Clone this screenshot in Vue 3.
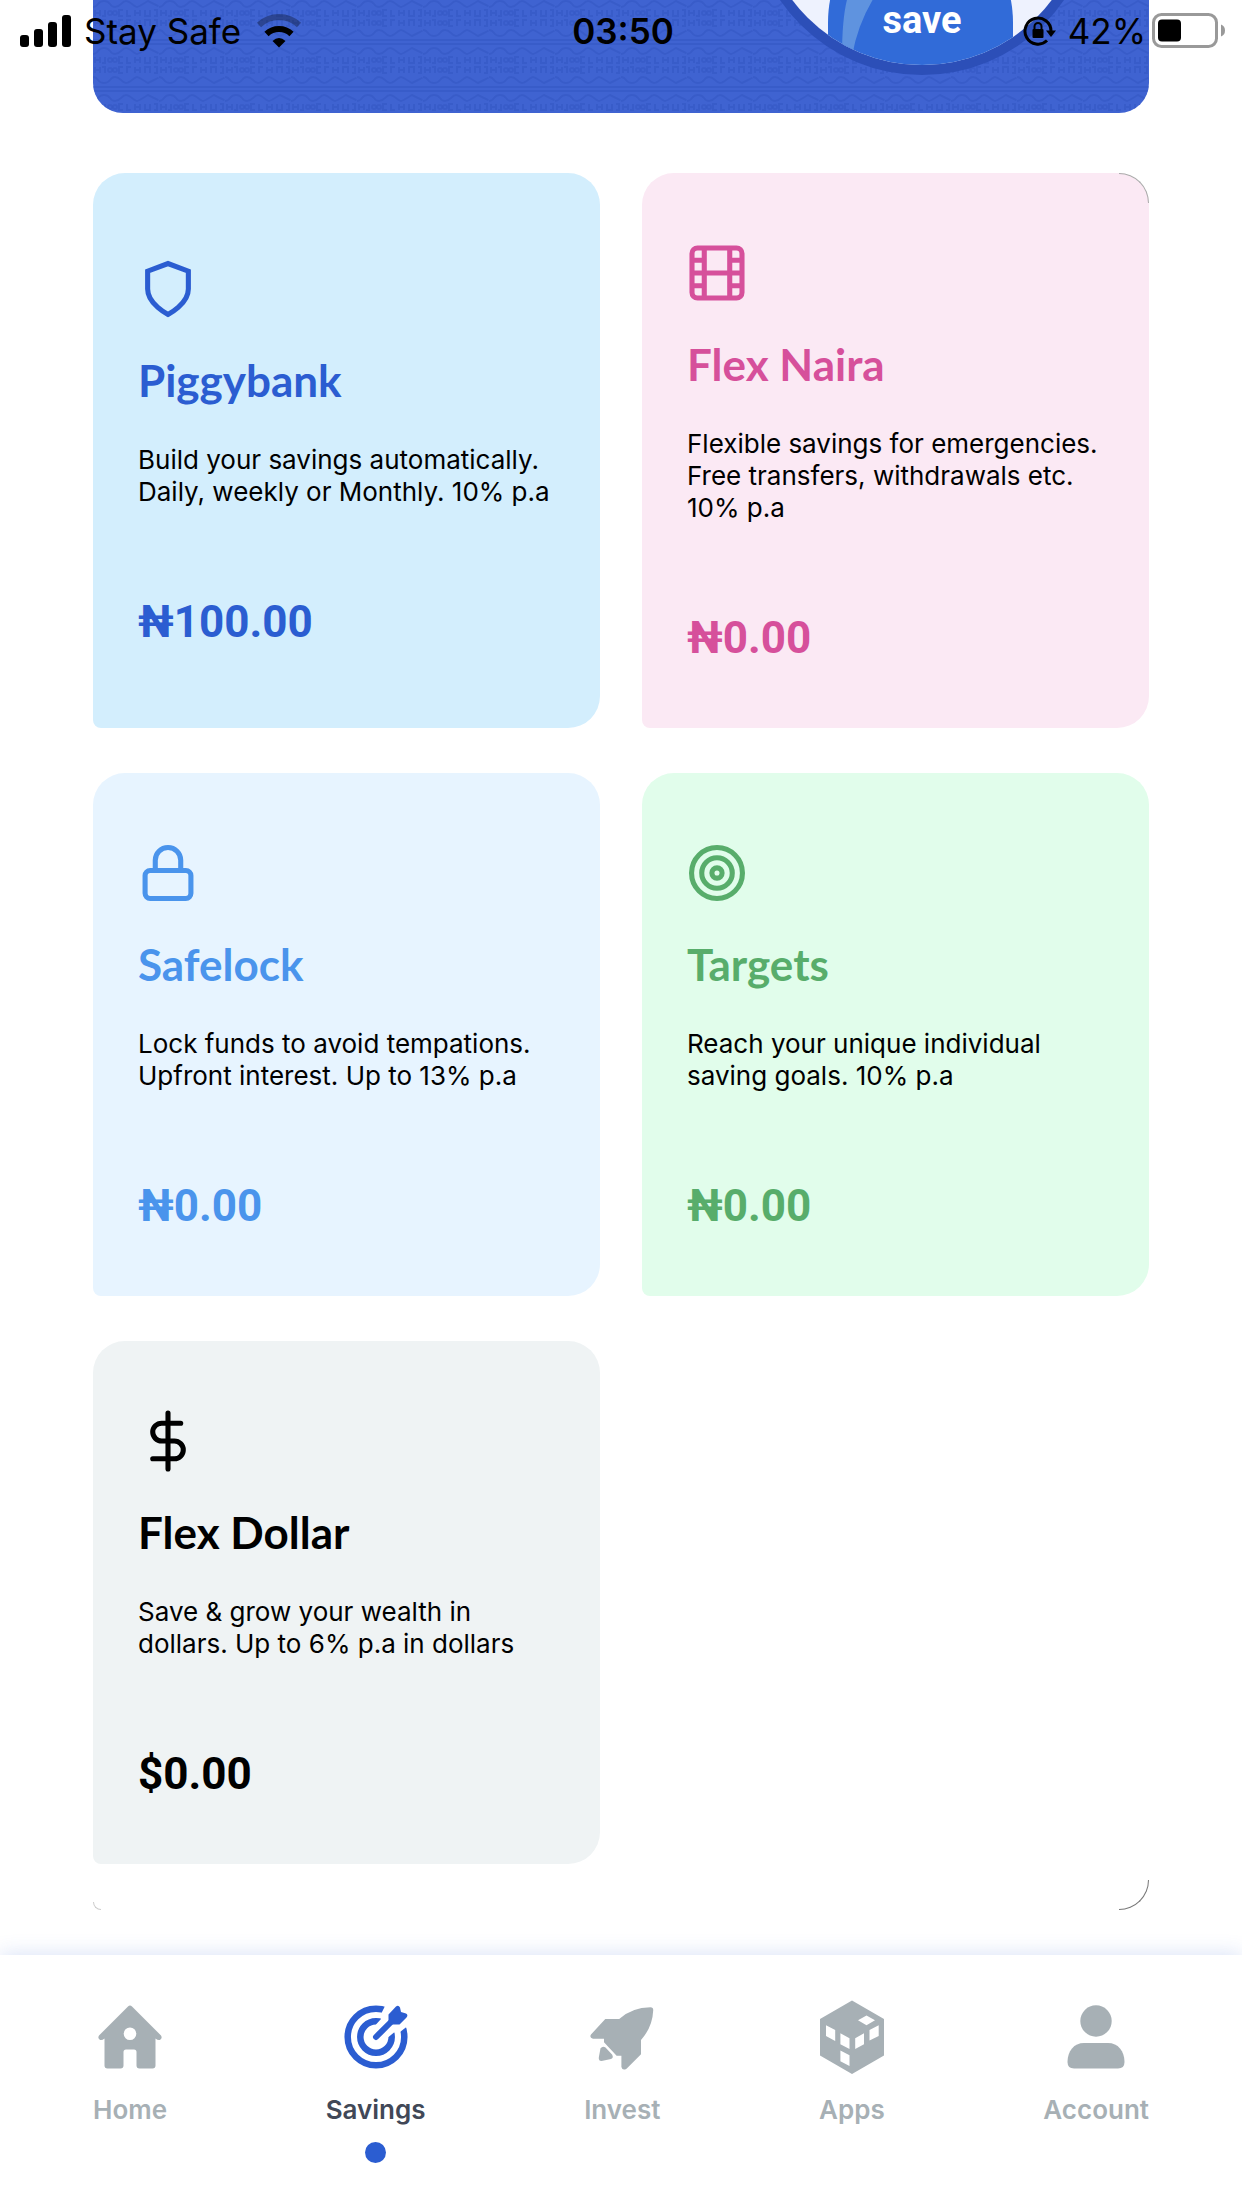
<script setup>
const plans = [
  { id: 'piggybank', name: 'Piggybank', about: 'Build your savings automatically.\nDaily, weekly or Monthly. 10% p.a', amount: '₦100.00' },
  { id: 'flex-naira', name: 'Flex Naira', about: 'Flexible savings for emergencies.\nFree transfers, withdrawals etc.\n10% p.a', amount: '₦0.00' },
  { id: 'safelock', name: 'Safelock', about: 'Lock funds to avoid tempations.\nUpfront interest. Up to 13% p.a', amount: '₦0.00' },
  { id: 'targets', name: 'Targets', about: 'Reach your unique individual\nsaving goals. 10% p.a', amount: '₦0.00' },
  { id: 'flex-dollar', name: 'Flex Dollar', about: 'Save & grow your wealth in\ndollars. Up to 6% p.a in dollars', amount: '$0.00' },
]
const tabs = [
  { id: 'home', label: 'Home' },
  { id: 'savings', label: 'Savings' },
  { id: 'invest', label: 'Invest' },
  { id: 'apps', label: 'Apps' },
  { id: 'account', label: 'Account' },
]
const current = 'savings'
</script>

<template>
  <div class="screen">
    <header class="status">
      <div class="status-side">
        <svg class="signal" width="52" height="34" viewBox="0 0 52 34" aria-hidden="true">
          <rect x="0" y="21" width="9" height="12" rx="3" />
          <rect x="14" y="15" width="9" height="18" rx="3" />
          <rect x="28" y="8" width="9" height="25" rx="3" />
          <rect x="42" y="1" width="9" height="32" rx="3" />
        </svg>
        <span class="carrier">Stay Safe</span>
        <svg width="46" height="34" viewBox="0 0 46 34" aria-hidden="true">
          <path d="M3 11A29 29 0 0 1 43 11" fill="none" stroke="#000" stroke-opacity=".3" stroke-width="6" />
          <path d="M10.500 20A18 18 0 0 1 35.500 20" fill="none" stroke="#000" stroke-width="6" />
          <path d="M16.500 27Q23 21 29.500 27L23 33.500Z" />
        </svg>
      </div>
      <time class="clock">03:50</time>
      <div class="status-side status-end">
        <svg width="34" height="34" viewBox="0 0 34 34" aria-hidden="true">
          <path d="M29 17A13 13 0 1 0 25 26.500" fill="none" stroke="#000" stroke-width="3" />
          <path d="M24 16.500H34L29 23Z" />
          <rect x="10.500" y="15" width="11" height="9" rx="1" />
          <path d="M12.500 15V12.500A3.500 3.500 0 0 1 19.500 12.500V15" fill="none" stroke="#000" stroke-width="2" />
        </svg>
        <span class="percent">42%</span>
        <svg width="74" height="36" viewBox="0 0 74 36" aria-hidden="true">
          <rect x="1.500" y="1.500" width="63" height="32" rx="8" fill="none" stroke="#999" stroke-width="3" />
          <rect x="6" y="6.500" width="23" height="22" rx="4" />
          <path d="M69 11.500Q73 13 73 17.500T69 23.500Z" fill="#999" />
        </svg>
      </div>
    </header>

    <main class="content">
      <section class="hero">
        <svg class="weave" width="100%" height="100%" aria-hidden="true">
          <defs>
            <pattern id="weave" width="66" height="47" y="39" patternUnits="userSpaceOnUse">
              <g fill="none" stroke="#3255c2" stroke-opacity=".55" stroke-width="2">
                <path d="M0 1H66M0 5H66" />
                <path d="M0 15Q3 15 5 12T11 9T17 12T22 15T28 12T33 9T39 12T44 15T50 12T55 9T61 12T66 15" />
                <path d="M0 38Q3 38 5 41T11 44T17 41T22 38T28 41T33 44T39 41T44 38T50 41T55 44T61 41T66 38" />
                <path d="M2 18V24M2 21H7M7 18V24M12 18V24H9M30 18H26V24H30M34 18V24H38M42 18V24M42 21H47M47 18V24M52 18V24H57V18M61 18H64V24H61" />
                <path d="M2 28V34M2 31H7M7 28V34M12 34V28H9M30 28H26V34H30M34 34V28H38M42 28V34M42 31H47M47 28V34M52 34V28H57V34M61 28H64V34H61" />
                <circle cx="17" cy="21" r="2" /><circle cx="22" cy="21" r="2" />
                <circle cx="17" cy="31" r="2" /><circle cx="22" cy="31" r="2" />
              </g>
            </pattern>
          </defs>
          <rect width="100%" height="100%" fill="url(#weave)" />
        </svg>
        <button class="save" type="button">
          <svg class="save-art" viewBox="0 0 344 344" aria-hidden="true">
            <defs><clipPath id="bowl"><circle cx="172" cy="172" r="162" /></clipPath></defs>
            <circle cx="172" cy="172" r="172" fill="#2c4fb8" />
            <g clip-path="url(#bowl)">
              <rect width="344" height="344" fill="#eef2fe" />
              <path d="M78 344V292C78 230 120 190 170 190S263 230 263 292V344Z" fill="#316bd8" />
              <path d="M98 265Q92 285 92 325H102Q108 292 125 265Z" fill="#5f93df" />
            </g>
          </svg>
          <span class="save-label">save</span>
        </button>
      </section>

      <section class="plans">
        <a v-for="plan in plans" :key="plan.id" class="card" :class="plan.id" href="#">
          <svg class="card-icon" viewBox="1 1 22 22" aria-hidden="true">
            <path v-if="plan.id === 'piggybank'" d="M12 22s8-4 8-10V5l-8-3-8 3v7c0 6 8 10 8 10z" />
            <g v-else-if="plan.id === 'flex-naira'">
              <rect x="2.180" y="2.180" width="19.640" height="19.640" rx="2.180" />
              <path d="M7 2v20M17 2v20M2 12h20M2 7h5M2 17h5M17 17h5M17 7h5" />
            </g>
            <g v-else-if="plan.id === 'safelock'">
              <rect x="3" y="11" width="18" height="11" rx="2" />
              <path d="M7 11V7a5 5 0 0 1 10 0v4" />
            </g>
            <g v-else-if="plan.id === 'targets'">
              <circle cx="12" cy="12" r="10" /><circle cx="12" cy="12" r="6" /><circle cx="12" cy="12" r="2" />
            </g>
            <path v-else stroke-linecap="round" d="M12 1v22M17 5H9.500a3.500 3.500 0 0 0 0 7h5a3.500 3.500 0 0 1 0 7H6" />
          </svg>
          <h2 class="card-name">{{ plan.name }}</h2>
          <p class="card-about">{{ plan.about }}</p>
          <strong class="card-amount">{{ plan.amount }}</strong>
        </a>
        <i class="edge edge-top"></i>
        <i class="edge edge-bottom"></i>
        <i class="edge edge-left"></i>
      </section>
    </main>

    <nav class="tabs">
      <a v-for="tab in tabs" :key="tab.id" class="tab" :class="{ active: tab.id === current }" href="#">
        <svg class="tab-icon" viewBox="0 0 64 64" aria-hidden="true">
          <path v-if="tab.id === 'home'" fill-rule="evenodd" d="M30 1.500Q32-.5 34 1.500L63 30.500Q64.500 33 62.500 34.500Q60.500 36 57.500 33.500V60.500Q57.500 63.500 54.500 63.500H41.500Q38.500 63.500 38.500 60.500V47Q38.500 44.500 36 44.500H28Q25.500 44.500 25.500 47V60.500Q25.500 63.500 22.500 63.500H9.500Q6.500 63.500 6.500 60.500V33.500Q3.500 36 1.500 34.500Q-.5 33 1 30.500ZM32 22.500A6.300 6.300 0 1 0 32 35.100A6.300 6.300 0 1 0 32 22.500Z" />
          <g v-else-if="tab.id === 'savings'">
            <g fill="none" stroke="currentColor" stroke-width="6.500">
              <circle cx="32" cy="32" r="28.300" /><circle cx="32" cy="32" r="15.700" />
            </g>
            <path d="M32 32V19.500L37 14L37.500 8L42-1L68-4L65 20L56 27L50 27.500L44.500 32Z" fill="#fff" />
            <path d="M32 32L49 15" stroke="currentColor" stroke-width="6" stroke-linecap="round" />
            <path d="M44.500 9.500L52 1.500Q54.500-.5 56 2.500L57 7L62 8.500Q64.500 10 62.500 12.500L55.500 19.500H44.500Z" />
          </g>
          <g v-else-if="tab.id === 'invest'">
            <path d="M15.300 14H29.200Q42 2.500 60.500 2.300Q63.500 2.300 63.200 5.500Q62.500 22 51 35V49.300L36.500 63.700Q32.500 66 31.400 62V50.700H26.600L14 37.300V33.700H3Q-1 32.500 1 29.500Z" />
            <path d="M10.500 43.500Q12.500 40.500 15.500 42.500L22 49.500Q24 52.500 21 54L11.500 56Q8.500 56 8.800 52.500Z" />
          </g>
          <path v-else-if="tab.id === 'apps'" fill-rule="evenodd" d="M32-4.500L64 14V50.500L32 69L0 50.500V14ZM46.500 10.500L38 15.300L46.500 20.200L55 15.300ZM6 20.200V31L15.200 36V25ZM20.400 28.200V39.200L29.500 44V33.200ZM20.400 45.500V56.200L29.500 61V50.200ZM44 28.200L35.200 33.200V44L44 39.200ZM58.700 20.200L49.500 25V35.500L58.700 31Z" />
          <g v-else>
            <circle cx="32" cy="16" r="15.700" />
            <path d="M20 38H44C54 38 60.500 46 60.500 57Q60.500 63.500 54 63.500H10Q3.500 63.500 3.500 57C3.500 46 10 38 20 38Z" />
          </g>
        </svg>
        <span class="tab-label">{{ tab.label }}</span>
        <i v-if="tab.id === current" class="tab-dot"></i>
      </a>
    </nav>
  </div>
</template>

<style>
body {
  margin: 0;
  background: #fff;
}
</style>

<style scoped>
.screen {
  position: relative;
  display: flex;
  flex-direction: column;
  min-height: 100vh;
  overflow: hidden;
  background: #fff;
  font-family: Inter, "Liberation Sans", sans-serif;
  color: #000;
}

.status {
  position: absolute;
  inset: 0 0 auto;
  z-index: 2;
  display: flex;
  align-items: center;
  justify-content: space-between;
  height: 62px;
  padding: 0 16px 0 20px;
  font-size: 35px;
  line-height: 40px;
}
.status-side {
  display: flex;
  flex: 1;
  align-items: center;
}
.status-end {
  justify-content: flex-end;
}
.carrier {
  margin: 0 15px 0 12px;
}
.clock {
  font-weight: 600;
}
.percent {
  margin: 0 6px 0 12px;
}

.content {
  padding: 0 93px 45px;
}

.hero {
  position: relative;
  height: 113px;
  overflow: hidden;
  border-radius: 0 0 30px 30px;
  background: #3f63d1;
}
.weave {
  display: block;
}
.save {
  position: absolute;
  right: 55px;
  bottom: 38px;
  width: 344px;
  height: 344px;
  padding: 0;
  border: 0;
  border-radius: 50%;
  background: none;
  color: #fff;
  font: 700 38px/36px Roboto, "Liberation Sans", sans-serif;
  display: flex;
  align-items: flex-end;
  justify-content: center;
}
.save-art {
  position: absolute;
  inset: 0;
}
.save-label {
  position: relative;
  padding-bottom: 37px;
}

.plans {
  position: relative;
  display: grid;
  grid-template-columns: 1fr 1fr;
  gap: 45px 42px;
  margin-top: 60px;
  padding-bottom: 46px;
}
.card {
  display: flex;
  flex-direction: column;
  align-items: flex-start;
  justify-content: center;
  padding: 72px 16px 62px 45px;
  border-radius: 32px 32px 32px 8px;
  text-decoration: none;
}
.card-icon {
  width: 60px;
  height: 56px;
  overflow: visible;
  fill: none;
  stroke: currentColor;
  stroke-width: 2;
}
.card-name,
.card-amount {
  font-size: 44px;
  font-weight: 700;
  line-height: 56px;
}
.card-name {
  margin: 35px 0 36px;
  font-family: Lato, "Liberation Sans", sans-serif;
}
.card-about {
  margin: 0 0 86px;
  color: #000;
  font-size: 26px;
  line-height: 32px;
  white-space: pre-line;
}
.card-amount {
  font-family: Roboto, "Liberation Sans", sans-serif;
}
.piggybank { background: #d3eefd; color: #2b5dd1; }
.flex-naira { background: #fbe9f4; color: #d6509b; }
.safelock { background: #e7f4ff; color: #4a94ec; }
.targets { background: #e1fdeb; color: #58ad6b; }
.flex-dollar { background: #eff3f4; color: #000; }

/* Hairlines on the rounded corners of the plan list */
.edge {
  position: absolute;
  right: 0;
  box-sizing: border-box;
  width: 30px;
  height: 30px;
  border: 0 solid #aaa;
}
.edge-top {
  top: 0;
  border-width: 1px 1px 0 0;
  border-radius: 0 32px 0 0;
}
.edge-bottom {
  bottom: 0;
  border-width: 0 1px 1px 0;
  border-radius: 0 0 32px;
  border-color: #777;
}
.edge-left {
  right: auto;
  bottom: 0;
  left: 0;
  width: 8px;
  height: 8px;
  border-width: 0 0 1px 1px;
  border-radius: 0 0 0 8px;
  border-color: #ccc;
}

.tabs {
  display: flex;
  flex: 1;
  align-items: flex-start;
  justify-content: space-between;
  padding: 50px 93px 44px;
  background: #fff;
  box-shadow: 0 0 20px rgba(43, 93, 209, 0.2);
}
.tab {
  display: flex;
  flex-direction: column;
  align-items: center;
  color: #a7b0b5;
  text-decoration: none;
}
.tab-icon {
  width: 64px;
  height: 64px;
  overflow: visible;
  fill: currentColor;
}
.tab-label {
  margin-top: 25px;
  font-size: 26px;
  font-weight: 600;
  line-height: 32px;
}
.tab.active {
  color: #2b5dd1;
}
.active .tab-label {
  color: #414857;
}
.tab-dot {
  width: 21px;
  height: 21px;
  margin-top: 16px;
  border-radius: 50%;
  background: currentColor;
}
</style>
